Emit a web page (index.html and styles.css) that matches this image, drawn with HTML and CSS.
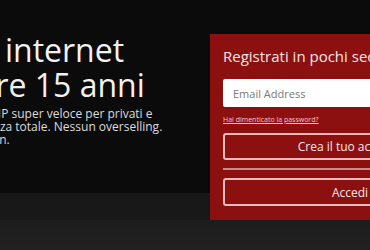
FILE: index.html
```html
<!DOCTYPE html>
<html lang="it">
<head>
<meta charset="utf-8">
<title>Internet da oltre 15 anni</title>
<link rel="stylesheet" href="styles.css">
</head>
<body>
<section class="hero">
  <div class="hero-copy">
    <h1 class="hero-title">
      <span class="line title-a">Il vero internet</span>
      <span class="line title-b">da oltre 15 anni</span>
    </h1>
    <p class="hero-text">
      <span class="line text-a">Fibra, ADSL e VoIP super veloce per privati e</span>
      <span class="line text-b">aziende. Assistenza totale. Nessun overselling.</span>
      <span class="line text-c">Supporto sempre on.</span>
    </p>
  </div>
  <form class="signup">
    <h2 class="signup-title">Registrati in pochi secondi</h2>
    <input class="signup-input" type="email" placeholder="Email Address">
    <a class="signup-link" href="#">Hai dimenticato la password?</a>
    <button class="signup-btn" type="button">Crea il tuo account</button>
    <hr class="signup-sep">
    <button class="signup-btn signup-btn-last" type="button">Accedi</button>
  </form>
</section>
</body>
</html>
```
FILE: styles.css
```css
html, body {
  margin: 0;
  padding: 0;
}
body {
  width: 370px;
  height: 250px;
  overflow: hidden;
  font-family: "Open Sans", "Noto Sans", sans-serif;
  background: linear-gradient(to bottom, #0b0b0b 0, #0b0b0b 193px, #181818 193px, #181818 220px, #1d1d1d 220px, #212121 250px);
}
.hero {
  display: grid;
  grid-template-columns: 210px 281px;
  align-items: start;
  padding-top: 34px;
}
.hero-copy {
  min-width: 0;
}
.line {
  display: block;
  white-space: nowrap;
}
.hero-title {
  margin: -2px 0 0;
  font-size: 32px;
  line-height: 35px;
  font-weight: 400;
  color: #f2f2f2;
}
.title-a { margin-left: -95px; }
.title-b { margin-left: -89px; }
.hero-text {
  margin: 5px 0 0;
  font-size: 12px;
  line-height: 13px;
  color: #dcdcdc;
}
.text-a { margin-left: -93px; }
.text-b { margin-left: -96px; }
.text-c { margin-left: -109px; }
.signup {
  display: flex;
  flex-direction: column;
  background: #8d1010;
  padding: 12px 14px 14px 13px;
}
.signup-title {
  margin: 0 0 13px;
  font-size: 15px;
  line-height: 20px;
  font-weight: 400;
  color: #f3e7e7;
  white-space: nowrap;
}
.signup-input {
  height: 28px;
  box-sizing: border-box;
  border: none;
  border-radius: 2px;
  padding: 0 10px;
  font-family: inherit;
  font-size: 11px;
  background: #fff;
}
.signup-input::placeholder {
  color: #7a7a7a;
}
.signup-link {
  align-self: flex-start;
  margin-top: 8px;
  font-size: 7px;
  line-height: 10px;
  color: #f0c8c8;
  text-decoration: underline;
}
.signup-btn {
  margin-top: 8px;
  height: 27px;
  box-sizing: border-box;
  border: 2px solid #e6bcbc;
  border-radius: 3px;
  background: transparent;
  color: #f4e8e8;
  font-family: inherit;
  font-size: 12px;
}
.signup-sep {
  width: 100%;
  margin: 8px 0 0;
  border: none;
  height: 2px;
  background: #c88a8a;
}
.signup-btn-last {
  height: 28px;
}
```
